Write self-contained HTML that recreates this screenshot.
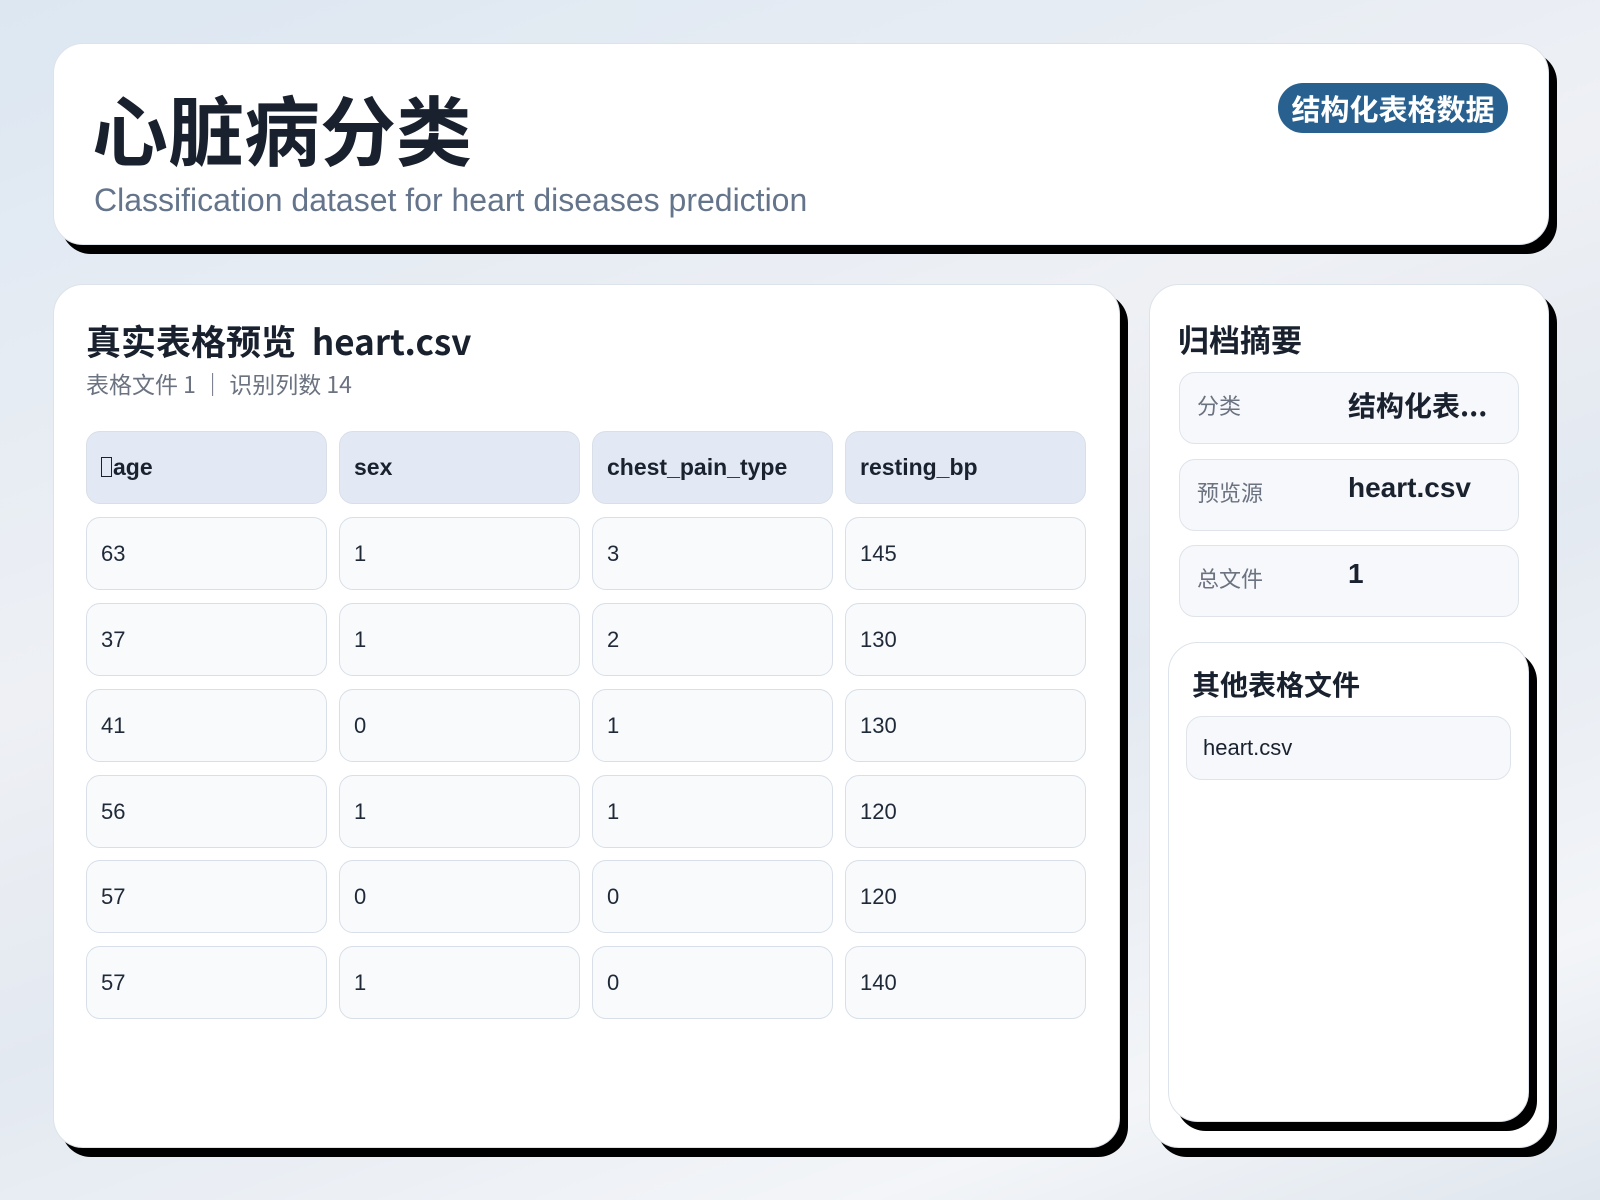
<!DOCTYPE html>
<html><head><meta charset="utf-8"><style>
*{box-sizing:border-box;margin:0;padding:0}
body{width:1600px;height:1200px;overflow:hidden;font-family:"Liberation Sans","Noto Sans CJK SC",sans-serif;background:linear-gradient(160deg,#dce7f2 0%,#eef0f4 40%,#e3e9f1 60%,#f3f5f8 85%,#dfe6ee 100%);position:relative;color:#1a2230}
.card{position:absolute;background:#fff;border-radius:30px;border:1px solid #dde3ea;box-shadow:8px 9px 0 #000}
.cjk{font-family:"Noto Sans CJK SC","Liberation Sans",sans-serif}
.t{position:absolute;white-space:nowrap}
.cell{position:absolute;width:241px;height:73px;border-radius:14px;border:1px solid #d8dfe8;background:#f8fafc;font-size:22px;padding-left:14px;line-height:71px;color:#1f2937}
.hd{background:#e2e9f4;font-weight:bold;color:#1a2230;font-size:23px}
.row{position:absolute;left:1179px;width:340px;height:72px;border-radius:16px;border:1px solid #dfe4ea;background:#f6f8fb}
.lab{position:absolute;left:17px;top:16px;font-size:22px;color:#6b7280}
.val{position:absolute;left:168px;top:12px;font-size:28px;font-weight:bold;color:#1a2230}
</style></head><body>
<div class="card" style="left:53px;top:43px;width:1496px;height:202px"></div>
<div class="t cjk" style="left:92px;top:72px;font-size:76px;font-weight:bold;color:#18212d;letter-spacing:0px">心脏病分类</div>
<div class="t" style="left:94px;top:182px;font-size:32px;color:#64748b">Classification dataset for heart diseases prediction</div>
<div class="t cjk" style="left:1278px;top:83px;width:230px;height:50px;border-radius:25px;background:#28618f;color:#fff;font-size:29px;font-weight:bold;text-align:center;line-height:50px">结构化表格数据</div>

<div class="card" style="left:53px;top:284px;width:1067px;height:864px"></div>
<div class="t cjk" style="left:86px;top:315px;font-size:35px;font-weight:bold;color:#18212d">真实表格预览 &nbsp;heart.csv</div>
<div class="t cjk" style="left:86px;top:366px;font-size:23px;color:#6b7280">表格文件 1 ｜ 识别列数 14</div>

<div class="cell hd" style="left:86px;top:431px"><span style="display:inline-block;width:11px;height:20px;border:1.5px solid #1a2230;vertical-align:-2px;margin-right:1px"></span>age</div>
<div class="cell hd" style="left:339px;top:431px">sex</div>
<div class="cell hd" style="left:592px;top:431px">chest_pain_type</div>
<div class="cell hd" style="left:845px;top:431px">resting_bp</div>

<div class="cell" style="left:86px;top:517px">63</div><div class="cell" style="left:339px;top:517px">1</div><div class="cell" style="left:592px;top:517px">3</div><div class="cell" style="left:845px;top:517px">145</div>
<div class="cell" style="left:86px;top:603px">37</div><div class="cell" style="left:339px;top:603px">1</div><div class="cell" style="left:592px;top:603px">2</div><div class="cell" style="left:845px;top:603px">130</div>
<div class="cell" style="left:86px;top:689px">41</div><div class="cell" style="left:339px;top:689px">0</div><div class="cell" style="left:592px;top:689px">1</div><div class="cell" style="left:845px;top:689px">130</div>
<div class="cell" style="left:86px;top:775px">56</div><div class="cell" style="left:339px;top:775px">1</div><div class="cell" style="left:592px;top:775px">1</div><div class="cell" style="left:845px;top:775px">120</div>
<div class="cell" style="left:86px;top:860px">57</div><div class="cell" style="left:339px;top:860px">0</div><div class="cell" style="left:592px;top:860px">0</div><div class="cell" style="left:845px;top:860px">120</div>
<div class="cell" style="left:86px;top:946px">57</div><div class="cell" style="left:339px;top:946px">1</div><div class="cell" style="left:592px;top:946px">0</div><div class="cell" style="left:845px;top:946px">140</div>

<div class="card" style="left:1149px;top:284px;width:400px;height:864px"></div>
<div class="t cjk" style="left:1178px;top:316px;font-size:31px;font-weight:bold;color:#18212d">归档摘要</div>
<div class="row" style="top:372px"><div class="lab cjk">分类</div><div class="val cjk">结构化表...</div></div>
<div class="row" style="top:459px"><div class="lab cjk">预览源</div><div class="val">heart.csv</div></div>
<div class="row" style="top:545px"><div class="lab cjk">总文件</div><div class="val">1</div></div>

<div class="card" style="left:1168px;top:642px;width:361px;height:480px"></div>
<div class="t cjk" style="left:1192px;top:664px;font-size:28px;font-weight:bold;color:#18212d">其他表格文件</div>
<div class="t" style="left:1186px;top:716px;width:325px;height:64px;border-radius:16px;border:1px solid #dfe4ea;background:#f6f8fb;font-size:22px;line-height:62px;padding-left:16px;color:#1a2230">heart.csv</div>
</body></html>
